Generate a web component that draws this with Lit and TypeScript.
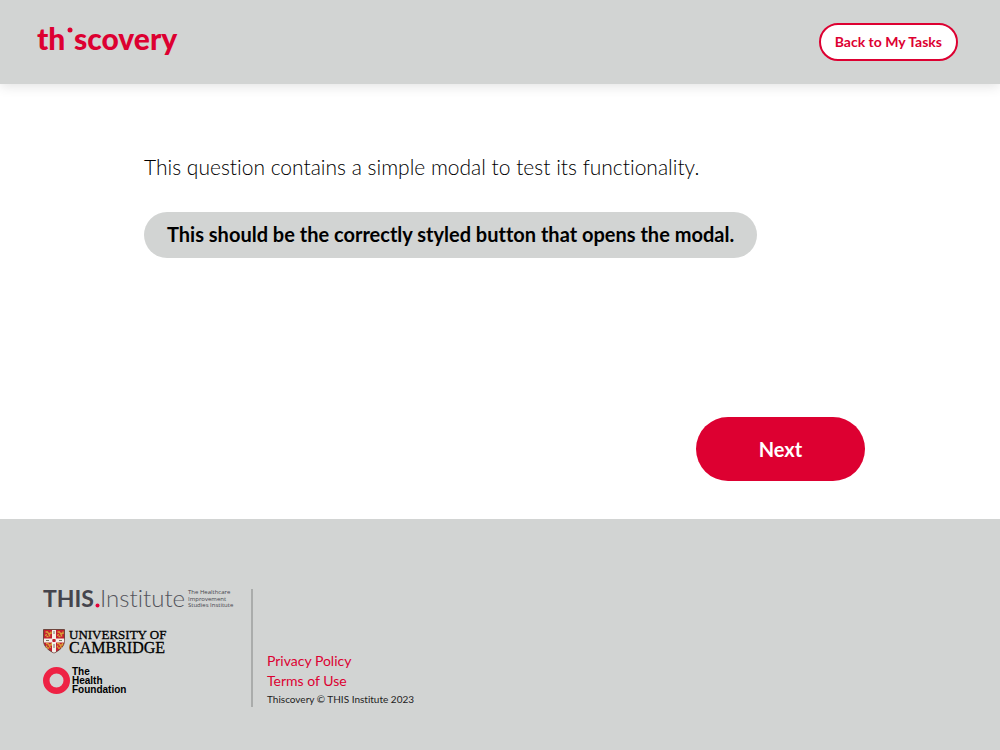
import { LitElement, html, css, svg } from "lit";
import { customElement, state } from "lit/decorators.js";

@customElement("thiscovery-logo")
class ThiscoveryLogo extends LitElement {
  static styles = css`
    :host { display: block; line-height: 0; }
    svg { overflow: visible; }
    text { font: 900 30px Lato, sans-serif; fill: #dd0031; }
    circle { fill: #dd0031; }
  `;
  render() {
    return html`<svg width="144" height="40" viewBox="0 0 144 40" role="img" aria-label="thiscovery">
      <text x="1" y="28">th</text>
      <circle cx="34" cy="8" r="2.500"></circle>
      <text x="38" y="28">scovery</text>
    </svg>`;
  }
}

@customElement("partner-logos")
class PartnerLogos extends LitElement {
  static styles = css`
    :host { display: flex; flex-direction: column; gap: 12px; }
    svg { display: block; overflow: visible; }
    text { font-variant-ligatures: none; }
    .strong { font: 700 23px Lato, sans-serif; fill: #45454d; }
    .thin { font: 300 24px Lato, sans-serif; fill: #54545c; font-variant-ligatures: none; }
    .tiny { font: 400 6px "Open Sans", sans-serif; fill: #45454d; }
    .uni { font: 500 13px "Liberation Serif", serif; fill: #000; stroke: #000; stroke-width: 0.3px; }
    .cam { font: 500 16px "Liberation Serif", serif; fill: #000; stroke: #000; stroke-width: 0.3px; }
    .health { font: 700 10px "Liberation Sans", sans-serif; fill: #000; }
  `;
  private lion(x: number, y: number) {
    return svg`<path transform="translate(${x} ${y})" fill="none" stroke="#d9a336" stroke-width="1.3"
      d="M1 1.5h2l1 1.5h2.5M2 3.5l-1 2M4 3l1.5 3M6.5 1v2.5M2 6h2"></path>`;
  }
  render() {
    return html`
      <svg width="196" height="26" viewBox="0 0 196 26" role="img" aria-label="THIS Institute">
        <text class="strong" x="0" y="18">THIS</text>
        <circle cx="54.5" cy="16.500" r="2" fill="#e4003a"></circle>
        <text class="thin" x="57" y="18">Institute</text>
        <text class="tiny" x="145" y="5">The Healthcare</text>
        <text class="tiny" x="145" y="12">Improvement</text>
        <text class="tiny" x="145" y="18">Studies Institute</text>
      </svg>
      <svg width="130" height="28" viewBox="0 0 130 28" role="img" aria-label="University of Cambridge">
        <path d="M.5 2.5h21v11c0 6-5 10-10.500 12.500C5.500 23.500.5 19.500.5 13.500z" fill="#c51f30" stroke="#55372c" stroke-width=".8"></path>
        ${this.lion(1.5, 3.500)}${this.lion(13.5, 3.500)}${this.lion(2, 15)}${this.lion(13, 15)}
        <path d="M9 3h4v8.500h8.200v4H13v9.300l-2 1-2-1v-9.300H.9v-4H9z" fill="#f4efe8"></path>
        <path d="M11 4v3m0 10v4M3 13.500h3m10 0h3M9.500 13.500h3" stroke="#554" stroke-width=".8"></path>
        <rect x="9.500" y="12" width="3" height="3" fill="#c51f30"></rect>
        <text class="uni" x="26" y="12">UNIVERSITY OF</text>
        <text class="cam" x="26" y="26">CAMBRIDGE</text>
      </svg>
      <svg width="90" height="28" viewBox="0 0 90 28" role="img" aria-label="The Health Foundation">
        <circle cx="13.500" cy="13.500" r="10.250" fill="none" stroke="#ee2244" stroke-width="6.500"></circle>
        <text class="health" x="29" y="8">The</text>
        <text class="health" x="29" y="17">Health</text>
        <text class="health" x="29" y="26">Foundation</text>
      </svg>`;
  }
}

@customElement("app-root")
class AppRoot extends LitElement {
  @state() private open = false;

  static styles = css`
    :host {
      display: flex; flex-direction: column; min-height: 100vh;
      font-family: Lato, sans-serif; font-variant-ligatures: none; color: #000; background: #fff;
    }
    button { font-family: inherit; font-variant-ligatures: none; cursor: pointer; }
    header {
      display: flex; align-items: center; justify-content: space-between;
      box-sizing: border-box; height: 84px; padding: 0 42px 0 36px;
      background: #d2d4d3; box-shadow: 0 2px 12px rgba(0, 0, 0, 0.12);
    }
    .back {
      height: 38px; padding: 0 14px 2px; border: 2px solid #dd0031; border-radius: 19px;
      background: #fff; color: #dd0031; font-size: 14px; font-weight: 700;
    }
    main {
      flex: 1; display: flex; flex-direction: column; align-items: flex-start;
      padding: 68px 135px 38px 144px;
    }
    p { margin: 0 0 30px; font-size: 21px; line-height: 30px; font-weight: 300; }
    .open {
      height: 46px; padding: 0 23px 2px; border: 0; border-radius: 23px;
      background: #d2d4d3; color: #000; font-size: 20px; font-weight: 700;
    }
    .next {
      width: 169px; height: 64px; margin-top: auto; align-self: flex-end;
      border: 0; border-radius: 32px; background: #dd0031; color: #fff;
      font-size: 20px; font-weight: 700;
    }
    footer { display: flex; padding: 70px 43px 43px; background: #d2d4d3; }
    .links {
      display: flex; flex-direction: column; justify-content: flex-end;
      margin-left: 12px; padding-left: 14px; border-left: 2px solid #aaacab; height: 118px;
    }
    a { color: #dd0031; font-size: 14px; line-height: 20px; text-decoration: none; }
    small { font-size: 10px; line-height: 16px; color: #222; }
    dialog { border: 0; border-radius: 12px; padding: 24px; }
  `;

  render() {
    return html`
      <header>
        <thiscovery-logo></thiscovery-logo>
        <button class="back">Back to My Tasks</button>
      </header>
      <main>
        <p>This question contains a simple modal to test its functionality.</p>
        <button class="open" @click=${() => (this.open = !this.open)}>This should be the correctly styled button that opens the modal.</button>
        <dialog ?open=${this.open}></dialog>
        <button class="next">Next</button>
      </main>
      <footer>
        <partner-logos></partner-logos>
        <div class="links">
          <a href="#privacy">Privacy Policy</a>
          <a href="#terms">Terms of Use</a>
          <small>Thiscovery © THIS Institute 2023</small>
        </div>
      </footer>`;
  }
}
